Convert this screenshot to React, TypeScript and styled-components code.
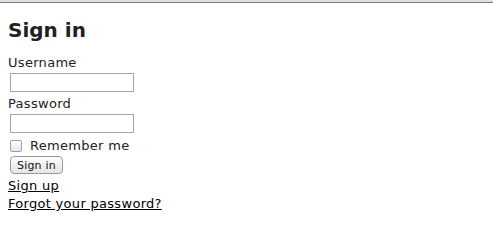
import React from 'react'
import styled, { createGlobalStyle } from 'styled-components'

const GlobalStyle = createGlobalStyle`
  html, body {
    margin: 0;
    padding: 0;
    background: #fff;
  }
  body {
    font-family: 'DejaVu Sans', Verdana, sans-serif;
    font-size: 13px;
    letter-spacing: 0.3px;
    color: #222;
  }
`

const ChromeEdge = styled.div`
  height: 2px;
  background: #e2e0dc;
  border-bottom: 1px solid #7a7a7a;
`

const Page = styled.div`
  padding: 0 8px;
`

const Title = styled.h1`
  margin: 15px 0 13px;
  font-size: 20px;
  font-weight: bold;
  letter-spacing: 0;
  color: #222;
  line-height: 24px;
`

const Form = styled.form`
  display: flex;
  flex-direction: column;
  align-items: flex-start;
`

const Label = styled.label`
  line-height: 16px;
`

const TextInput = styled.input`
  box-sizing: border-box;
  width: 124px;
  height: 19px;
  margin: 2px 0 4px 2px;
  border: 1px solid #a5a5a5;
  background: #fff;
`

const CheckRow = styled.label`
  display: flex;
  align-items: center;
  gap: 8px;
  margin: 1px 0 0 2px;
  line-height: 16px;
`

const Box = styled.span`
  box-sizing: border-box;
  width: 12px;
  height: 12px;
  border: 1px solid #a0a0a0;
  border-radius: 2px;
  background: linear-gradient(#fcfcfc, #e6e6e6);
`

const Button = styled.button`
  box-sizing: border-box;
  font-family: inherit;
  font-size: 11px;
  letter-spacing: 0.2px;
  color: #111;
  height: 18px;
  padding: 0 6px;
  margin: 2px 0 3px 2px;
  border: 1px solid #9a9a9a;
  border-radius: 4px;
  background: linear-gradient(#fefefe, #e4e4e4);
`

const Link = styled.a`
  color: #000;
  text-decoration: underline;
  line-height: 18px;
`

const App = () => {
  return (
    <>
      <GlobalStyle />
      <ChromeEdge />
      <Page>
        <Title>Sign in</Title>
        <Form onSubmit={(e) => e.preventDefault()}>
          <Label htmlFor="username">Username</Label>
          <TextInput id="username" type="text" />
          <Label htmlFor="password">Password</Label>
          <TextInput id="password" type="password" />
          <CheckRow>
            <Box />
            Remember me
          </CheckRow>
          <Button type="submit">Sign in</Button>
        </Form>
        <Link href="#">Sign up</Link>
        <br />
        <Link href="#">Forgot your password?</Link>
      </Page>
    </>
  )
}

export default App
